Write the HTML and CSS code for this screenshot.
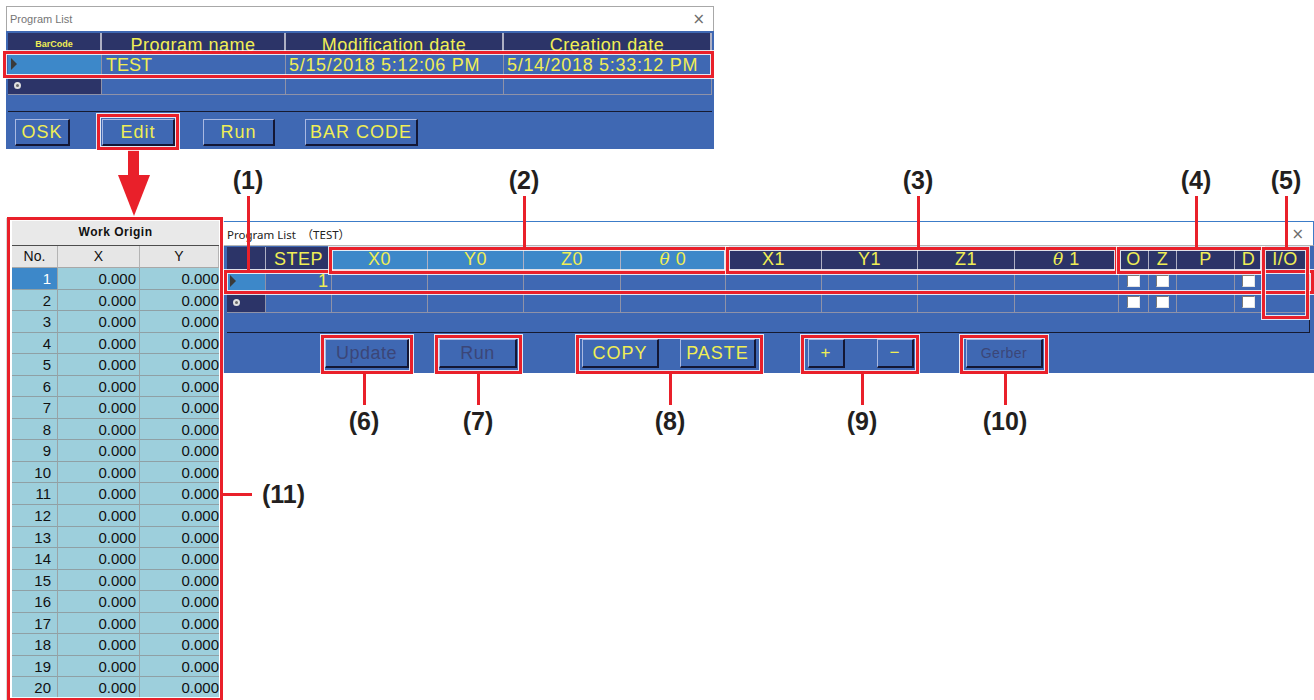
FILE: index.html
```html
<!DOCTYPE html>
<html lang="en">
<head>
    <meta charset="UTF-8" />
    <meta name="viewport" content="width=device-width, initial-scale=1" />
    <title>Program List</title>
    <link rel="stylesheet" href="styles.css">
</head>
<body>
<div class="figure">

    <!-- Program List window (top) -->
    <div class="win win-list">
        <div class="titlebar">
            <span>Program List</span>
            <span class="close">×</span>
        </div>
        <div class="win-body">
            <div class="list-grid">
                <div class="hd hd-small">BarCode</div>
                <div class="hd">Program name</div>
                <div class="hd">Modification date</div>
                <div class="hd">Creation date</div>

                <div class="cell sel"><span class="tri"></span></div>
                <div class="cell">TEST</div>
                <div class="cell date">5/15/2018 5:12:06 PM</div>
                <div class="cell date">5/14/2018 5:33:12 PM</div>

                <div class="cell newrow"><span class="dot"></span></div>
                <div class="cell"></div>
                <div class="cell"></div>
                <div class="cell"></div>
            </div>
            <div class="btnbar btnbar-list">
                <button class="btn b-osk">OSK</button>
                <button class="btn b-edit">Edit</button>
                <button class="btn b-run">Run</button>
                <button class="btn b-bar">BAR CODE</button>
            </div>
        </div>
    </div>

    <!-- Work Origin window -->
    <div class="win win-origin">
        <div class="origin-title">Work Origin</div>
        <div class="origin-grid">
            <div class="oh">No.</div><div class="oh">X</div><div class="oh">Y</div>
            <div class="oc on sel-no">1</div><div class="oc">0.000</div><div class="oc oy">0.000</div>
            <div class="oc on">2</div><div class="oc">0.000</div><div class="oc oy">0.000</div>
            <div class="oc on">3</div><div class="oc">0.000</div><div class="oc oy">0.000</div>
            <div class="oc on">4</div><div class="oc">0.000</div><div class="oc oy">0.000</div>
            <div class="oc on">5</div><div class="oc">0.000</div><div class="oc oy">0.000</div>
            <div class="oc on">6</div><div class="oc">0.000</div><div class="oc oy">0.000</div>
            <div class="oc on">7</div><div class="oc">0.000</div><div class="oc oy">0.000</div>
            <div class="oc on">8</div><div class="oc">0.000</div><div class="oc oy">0.000</div>
            <div class="oc on">9</div><div class="oc">0.000</div><div class="oc oy">0.000</div>
            <div class="oc on">10</div><div class="oc">0.000</div><div class="oc oy">0.000</div>
            <div class="oc on">11</div><div class="oc">0.000</div><div class="oc oy">0.000</div>
            <div class="oc on">12</div><div class="oc">0.000</div><div class="oc oy">0.000</div>
            <div class="oc on">13</div><div class="oc">0.000</div><div class="oc oy">0.000</div>
            <div class="oc on">14</div><div class="oc">0.000</div><div class="oc oy">0.000</div>
            <div class="oc on">15</div><div class="oc">0.000</div><div class="oc oy">0.000</div>
            <div class="oc on">16</div><div class="oc">0.000</div><div class="oc oy">0.000</div>
            <div class="oc on">17</div><div class="oc">0.000</div><div class="oc oy">0.000</div>
            <div class="oc on">18</div><div class="oc">0.000</div><div class="oc oy">0.000</div>
            <div class="oc on">19</div><div class="oc">0.000</div><div class="oc oy">0.000</div>
            <div class="oc on">20</div><div class="oc">0.000</div><div class="oc oy">0.000</div>
        </div>
    </div>

    <!-- Program edit window -->
    <div class="win win-main">
        <div class="titlebar titlebar-main">
            <span>Program List　（TEST）</span>
            <span class="close">×</span>
        </div>
        <div class="win-body">
            <div class="main-grid">
                <div class="hd"></div>
                <div class="hd">STEP</div>
                <div class="hd lt">X0</div>
                <div class="hd lt">Y0</div>
                <div class="hd lt">Z0</div>
                <div class="hd lt"><i>θ</i>&nbsp;0</div>
                <div class="hd">X1</div>
                <div class="hd">Y1</div>
                <div class="hd">Z1</div>
                <div class="hd"><i>θ</i>&nbsp;1</div>
                <div class="hd">O</div>
                <div class="hd">Z</div>
                <div class="hd">P</div>
                <div class="hd">D</div>
                <div class="hd">I/O</div>

                <div class="cell sel"><span class="tri"></span></div>
                <div class="cell num">1</div>
                <div class="cell"></div><div class="cell"></div><div class="cell"></div><div class="cell"></div>
                <div class="cell"></div><div class="cell"></div><div class="cell"></div><div class="cell"></div>
                <div class="cell ck"><span class="chk"></span></div>
                <div class="cell ck"><span class="chk"></span></div>
                <div class="cell"></div>
                <div class="cell ck"><span class="chk"></span></div>
                <div class="cell"></div>

                <div class="cell newrow"><span class="dot"></span></div>
                <div class="cell"></div>
                <div class="cell"></div><div class="cell"></div><div class="cell"></div><div class="cell"></div>
                <div class="cell"></div><div class="cell"></div><div class="cell"></div><div class="cell"></div>
                <div class="cell ck"><span class="chk"></span></div>
                <div class="cell ck"><span class="chk"></span></div>
                <div class="cell"></div>
                <div class="cell ck"><span class="chk"></span></div>
                <div class="cell"></div>
            </div>
            <div class="btnbar btnbar-main">
                <button class="btn off b-update">Update</button>
                <button class="btn off b-run2">Run</button>
                <button class="btn b-copy">COPY</button>
                <button class="btn b-paste">PASTE</button>
                <button class="btn b-plus">+</button>
                <button class="btn b-minus">−</button>
                <button class="btn off b-gerber">Gerber</button>
            </div>
        </div>
    </div>

    <!-- annotations -->
    <div class="arrow-down"><span class="shaft"></span><span class="head"></span></div>

    <div class="box bx-row"></div>
    <div class="box bx-edit"></div>
    <div class="box bx-origin"></div>
    <div class="box bx-1"></div>
    <div class="box bx-2"></div>
    <div class="box bx-3"></div>
    <div class="box bx-4"></div>
    <div class="box bx-5"></div>
    <div class="box bx-6"></div>
    <div class="box bx-7"></div>
    <div class="box bx-8"></div>
    <div class="box bx-9"></div>
    <div class="box bx-10"></div>

    <div class="callout up c1"><span class="lbl">(1)</span><span class="line"></span></div>
    <div class="callout up c2"><span class="lbl">(2)</span><span class="line"></span></div>
    <div class="callout up c3"><span class="lbl">(3)</span><span class="line"></span></div>
    <div class="callout up c4"><span class="lbl">(4)</span><span class="line"></span></div>
    <div class="callout up c5"><span class="lbl">(5)</span><span class="line"></span></div>

    <div class="callout down c6"><span class="line"></span><span class="lbl">(6)</span></div>
    <div class="callout down c7"><span class="line"></span><span class="lbl">(7)</span></div>
    <div class="callout down c8"><span class="line"></span><span class="lbl">(8)</span></div>
    <div class="callout down c9"><span class="line"></span><span class="lbl">(9)</span></div>
    <div class="callout down c10"><span class="line"></span><span class="lbl">(10)</span></div>

    <div class="callout side c11"><span class="line"></span><span class="lbl">(11)</span></div>

</div>
</body>
</html>
```

FILE: styles.css
```css
* {
    box-sizing: border-box;
}
body {
    margin: 0;
    background: #fff;
    font-family: "Liberation Sans", Arial, sans-serif;
}
.figure {
    position: relative;
    width: 1314px;
    height: 700px;
    overflow: hidden;
}

/* windows */
.win {
    position: absolute;
    display: flex;
    flex-direction: column;
}
.titlebar {
    display: flex;
    align-items: center;
    justify-content: space-between;
    background: #fff;
    flex: none;
}
.close {
    font-family: "DejaVu Sans", sans-serif;
    font-size: 15px;
    color: #6d6d6d;
}
.win-body {
    flex: 1;
    background: #3f68b3;
    display: flex;
    flex-direction: column;
}

.win-list {
    left: 6px;
    top: 6px;
    width: 708px;
    height: 143px;
}
.win-list .titlebar {
    height: 25px;
    border: 1px solid #a8a8a8;
    border-bottom: none;
    padding: 0 8px 0 3px;
    font-size: 11px;
    color: #757575;
}

.win-main {
    left: 223px;
    top: 221px;
    width: 1091px;
    height: 152px;
}
.titlebar-main {
    height: 25px;
    border-top: 1px solid #3c7cc8;
    border-right: 1px solid #3c7cc8;
    border-bottom: 1px solid #b5b5b5;
    padding: 0 9px 0 4px;
    font-family: "Noto Sans", "Noto Sans CJK JP", sans-serif;
    font-size: 11.5px;
    color: #222;
}

/* data grids */
.list-grid {
    margin: 2px 2px 0 2px;
    height: 79px;
    border-bottom: 1px solid #161a30;
    display: grid;
    grid-template-columns: 94px 184px 218px 1fr;
    grid-template-rows: 20px 23px 19px;
    align-content: start;
}
.main-grid {
    margin: 1px 4px 0 4px;
    height: 86px;
    border-right: 1px solid #161a30;
    border-bottom: 1px solid #161a30;
    display: grid;
    grid-template-columns: 39px 66px 96px 96px 97px 105px 96px 96px 97px 104px 30px 28px 58px 28px 45px;
    grid-template-rows: 24px 21px 21px;
    align-content: start;
}
.hd {
    background: #2c3468;
    color: #f0ee55;
    font-size: 18px;
    letter-spacing: 0.5px;
    line-height: 20px;
    text-align: center;
    white-space: nowrap;
    overflow: hidden;
    border-right: 2px solid #aeb0c4;
}
.list-grid .hd {
    line-height: 25px;
}
.list-grid .hd.hd-small {
    font-size: 9px;
    font-weight: bold;
    letter-spacing: 0;
    line-height: 22px;
}
.main-grid .hd {
    line-height: 24px;
    border-right-width: 1px;
    border-bottom: 2px solid #2c3468;
}
.hd.lt {
    background: #3d88c9;
}
.hd i {
    font-family: "DejaVu Serif", serif;
    font-size: 17px;
}
.cell {
    background: #3f68b3;
    color: #f0ee55;
    font-size: 18px;
    line-height: 21px;
    padding-left: 4px;
    white-space: nowrap;
    overflow: hidden;
    border-right: 1px solid #8f92a8;
    border-bottom: 1px solid #8f92a8;
}
.list-grid .cell {
    line-height: 24px;
}
.cell.date {
    letter-spacing: 0.7px;
    padding-left: 3px;
}
.cell.num {
    text-align: right;
    padding-right: 3px;
}
.cell.sel {
    background: #3d88c9;
    display: flex;
    align-items: center;
    padding-left: 3px;
}
.cell.newrow {
    background: #2c3468;
    display: flex;
    align-items: center;
    padding-left: 6px;
}
.cell.ck {
    display: flex;
    align-items: center;
    justify-content: center;
    padding-left: 0;
}
.tri {
    width: 0;
    height: 0;
    border-left: 6px solid #3a3a3a;
    border-top: 6px solid transparent;
    border-bottom: 6px solid transparent;
}
.dot {
    width: 7px;
    height: 7px;
    border-radius: 50%;
    border: 2px solid #e0e0e0;
    background: #6a6a6a;
}
.chk {
    width: 13px;
    height: 12px;
    background: #fff;
    border: 1px solid;
    border-color: #7a7a7a #e4e4e4 #e4e4e4 #7a7a7a;
}

/* button bars */
.btnbar {
    flex: 1;
    display: flex;
    align-items: flex-start;
}
.btnbar-list {
    padding-top: 7px;
}
.btnbar-main {
    padding-top: 6px;
}
.btn {
    height: 27px;
    padding: 0;
    background: #3f68b3;
    color: #f0ee55;
    font-family: "Liberation Sans", Arial, sans-serif;
    font-size: 18px;
    letter-spacing: 1px;
    border: 1px solid;
    border-width: 1px 2px 2px 1px;
    border-color: #a9b9e2 #131735 #131735 #a9b9e2;
}
.btn.off {
    color: #3b4678;
    letter-spacing: 0.5px;
}
.btnbar-main .btn {
    height: 29px;
}
.b-osk { width: 55px; margin-left: 9px; }
.b-edit { width: 73px; margin-left: 32px; }
.b-run { width: 72px; margin-left: 28px; }
.b-bar { width: 113px; margin-left: 30px; }

.b-update { width: 84px; margin-left: 102px; }
.b-run2 { width: 78px; margin-left: 30px; }
.b-copy { width: 77px; margin-left: 65px; }
.b-paste { width: 76px; margin-left: 21px; }
.b-plus { width: 37px; margin-left: 52px; font-size: 17px; }
.b-minus { width: 37px; margin-left: 32px; font-size: 17px; }
.b-gerber { width: 77px; margin-left: 52px; font-size: 14px; }

/* work origin table */
.win-origin {
    left: 6px;
    top: 218px;
    width: 213px;
    height: 482px;
    border-left: 1px solid #000;
    padding: 2px 0 0 5px;
}
.origin-title {
    height: 26px;
    background: #e9e9e9;
    border-bottom: 1px solid #4d4d4d;
    font-size: 12px;
    font-weight: bold;
    letter-spacing: 0.5px;
    line-height: 25px;
    text-align: center;
    color: #111;
}
.origin-grid {
    display: grid;
    grid-template-columns: 46px 82px 1fr;
    grid-template-rows: 22px;
    grid-auto-rows: 21.55px;
    background: #9dcfdc;
}
.oh {
    background: #e6e6e6;
    font-size: 14px;
    line-height: 21px;
    text-align: center;
    border-right: 1px solid #b4b4b4;
    border-bottom: 1px solid #a8a8a8;
    color: #111;
}
.oc {
    font-size: 15px;
    line-height: 21px;
    text-align: right;
    padding-right: 3px;
    color: #111;
    border-right: 1px solid #9aa3a6;
    border-bottom: 1px solid #8fa0a5;
}
.oc.on {
    padding-right: 6px;
}
.oc.oy {
    padding-right: 0;
    border-right: none;
}
.oc.sel-no {
    background: #3d88c9;
    color: #fff;
}

/* annotations */
.box {
    position: absolute;
    border: 3px solid #e9202a;
    box-shadow: 0 0 0 1px rgba(255, 255, 255, 0.85), inset 0 0 0 1px rgba(255, 255, 255, 0.85);
}
.bx-row { left: 3px; top: 51px; width: 711px; height: 27px; }
.bx-edit { left: 97px; top: 114px; width: 82px; height: 36px; }
.bx-origin { left: 7px; top: 217px; width: 216px; height: 484px; }
.bx-1 { left: 224px; top: 270px; width: 1090px; height: 24px; }
.bx-2 { left: 329px; top: 247px; width: 399px; height: 27px; }
.bx-3 { left: 726px; top: 247px; width: 392px; height: 27px; }
.bx-4 { left: 1117px; top: 247px; width: 147px; height: 27px; }
.bx-5 { left: 1262px; top: 247px; width: 47px; height: 72px; }
.bx-6 { left: 321px; top: 335px; width: 92px; height: 39px; }
.bx-7 { left: 435px; top: 335px; width: 87px; height: 39px; }
.bx-8 { left: 576px; top: 335px; width: 187px; height: 39px; }
.bx-9 { left: 801px; top: 335px; width: 118px; height: 39px; }
.bx-10 { left: 960px; top: 335px; width: 88px; height: 39px; }

.arrow-down {
    position: absolute;
    left: 117px;
    top: 150px;
    width: 33px;
    display: flex;
    flex-direction: column;
    align-items: center;
}
.arrow-down .shaft {
    width: 11px;
    height: 25px;
    background: #e9202a;
}
.arrow-down .head {
    width: 0;
    height: 0;
    border-top: 41px solid #e9202a;
    border-left: 16px solid transparent;
    border-right: 16px solid transparent;
}

.callout {
    position: absolute;
    display: flex;
    align-items: center;
}
.callout.up,
.callout.down {
    flex-direction: column;
    width: 60px;
}
.lbl {
    font-size: 25px;
    font-weight: bold;
    line-height: 30px;
    color: #231f20;
    white-space: nowrap;
}
.callout .line {
    background: #e9202a;
    width: 3px;
}
.callout.up .line { margin-top: 1px; height: 52px; }
.callout.down .line { height: 32px; margin-bottom: 1px; }

.c1 { left: 218px; top: 165px; }
.c1 .line { height: 75px !important; }
.c2 { left: 494px; top: 165px; }
.c3 { left: 888px; top: 165px; }
.c4 { left: 1166px; top: 165px; }
.c5 { left: 1256px; top: 165px; }

.c6 { left: 334px; top: 373px; }
.c7 { left: 448px; top: 373px; }
.c8 { left: 640px; top: 373px; }
.c9 { left: 832px; top: 373px; }
.c10 { left: 975px; top: 373px; }

.c11 { left: 222px; top: 479px; }
.callout.side .line {
    width: 30px;
    height: 3px;
    margin-right: 10px;
}
```
